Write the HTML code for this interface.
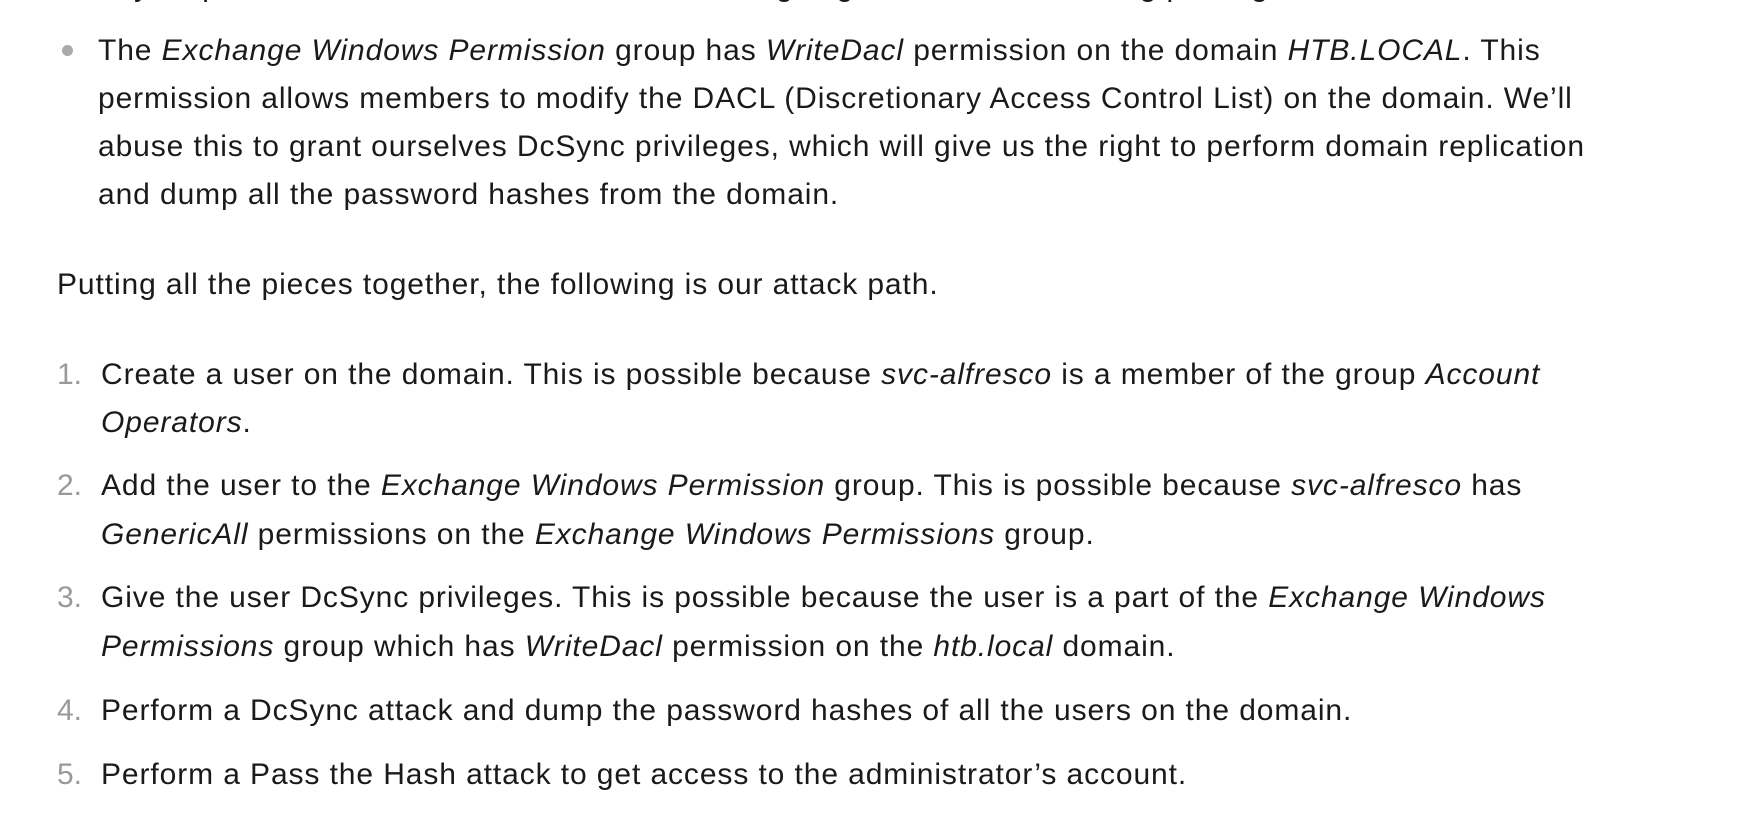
<!DOCTYPE html>
<html><head><meta charset="utf-8"><style>
body{margin:0;width:1764px;height:814px;background:#fff;overflow:hidden;position:relative;font-family:"Liberation Sans",Arial,sans-serif;font-size:30px;color:#1a1a1a;}
.l{position:absolute;white-space:nowrap;line-height:49px;height:49px;letter-spacing:0.9px;}
i{font-style:italic}
.n{position:absolute;color:#999;line-height:49px;font-size:30px}
.dot{position:absolute;width:11px;height:11px;border-radius:50%;background:#aaa}
</style></head><body>
<div class="l" style="left:57px;top:-38px">Finally, to perform an attack on the domain we are going to need the following privileges:</div>
<div class="dot" style="left:62px;top:45px"></div>
<div class="l" style="left:98px;top:26px">The <i>Exchange Windows Permission</i> group has <i>WriteDacl</i> permission on the domain <i>HTB.LOCAL</i>. This</div>
<div class="l" style="left:98px;top:74px">permission allows members to modify the DACL (Discretionary Access Control List) on the domain. We’ll</div>
<div class="l" style="left:98px;top:122px">abuse this to grant ourselves DcSync privileges, which will give us the right to perform domain replication</div>
<div class="l" style="left:98px;top:170px">and dump all the password hashes from the domain.</div>
<div class="l" style="left:57px;top:260px">Putting all the pieces together, the following is our attack path.</div>
<div class="n" style="left:57px;top:350px">1.</div>
<div class="l" style="left:101px;top:350px">Create a user on the domain. This is possible because <i>svc-alfresco</i> is a member of the group <i>Account</i></div>
<div class="l" style="left:101px;top:398px"><i>Operators</i>.</div>
<div class="n" style="left:57px;top:461px">2.</div>
<div class="l" style="left:101px;top:461px">Add the user to the <i>Exchange Windows Permission</i> group. This is possible because <i>svc-alfresco</i> has</div>
<div class="l" style="left:101px;top:510px"><i>GenericAll</i> permissions on the <i>Exchange Windows Permissions</i> group.</div>
<div class="n" style="left:57px;top:573px">3.</div>
<div class="l" style="left:101px;top:573px">Give the user DcSync privileges. This is possible because the user is a part of the <i>Exchange Windows</i></div>
<div class="l" style="left:101px;top:622px"><i>Permissions</i> group which has <i>WriteDacl</i> permission on the <i>htb.local</i> domain.</div>
<div class="n" style="left:57px;top:686px">4.</div>
<div class="l" style="left:101px;top:686px">Perform a DcSync attack and dump the password hashes of all the users on the domain.</div>
<div class="n" style="left:57px;top:750px">5.</div>
<div class="l" style="left:101px;top:750px">Perform a Pass the Hash attack to get access to the administrator’s account.</div>
</body></html>
